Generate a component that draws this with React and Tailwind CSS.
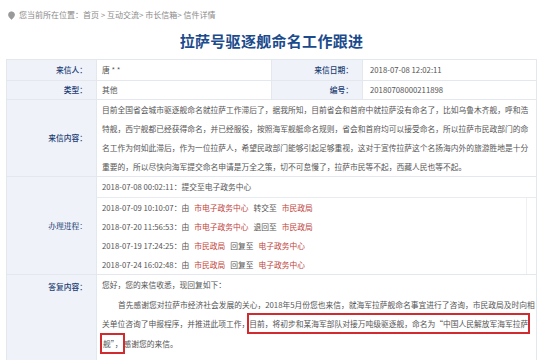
import { MapPin } from "lucide-react";

const label = "shrink-0 bg-[#eff2f8] flex items-center justify-end pr-[9px] text-[#1a3c74] font-medium border-r border-[#e3e7ee]";
const red = "text-[#c0443c] mx-[5px]";

const letterLines = [
    "目前全国省会城市驱逐舰命名就拉萨工作滞后了，据我所知，目前省会和首府中就拉萨没有命名了，比如乌鲁木齐舰，呼和浩",
    "特舰，西宁舰都已经获得命名，并已经服役，按照海军舰艇命名规则，省会和首府均可以接受命名，所以拉萨市民政部门的命",
    "名工作为何如此滞后，作为一位拉萨人，希望民政部门能够引起足够重视，这对于宣传拉萨这个名扬海内外的旅游胜地是十分",
    "重要的，所以尽快向海军提交命名申请是万全之策，切不可怠慢了，拉萨市民等不起，西藏人民也等不起。",
];

const steps = [
    ["2018-07-09 10:10:07", "市电子政务中心", "转交至", "市民政局"],
    ["2018-07-20 11:56:53", "市电子政务中心", "退回至", "市民政局"],
    ["2018-07-19 17:24:25", "市民政局", "回复至", "电子政务中心"],
    ["2018-07-24 16:02:48", "市民政局", "回复至", "电子政务中心"],
];

export default function App() {
    return (
        <div className="w-[550px] h-[360px] overflow-hidden bg-white text-[7.75px] text-[#555] font-['Noto_Sans_CJK_SC',sans-serif]">
            {/* Breadcrumb */}
            <div className="h-[30px] flex items-center pl-[7px] gap-[3px] text-[8px] text-[#8a8a8a]">
                <MapPin size={9} className="fill-[#9a9a9a] text-[#9a9a9a]" />
                <span>您当前所在位置：首页 &gt; 互动交流&gt; 市长信箱&gt; 信件详情</span>
            </div>

            <div className="ml-[6px] w-[531px]">
                {/* Title */}
                <div className="h-[22px] mb-[7px] flex items-center justify-center text-[15px] font-bold text-[#1b4b8c] tracking-[0.3px]">
                    拉萨号驱逐舰命名工作跟进
                </div>

                {/* Table */}
                <div className="border border-[#e3e7ee] border-b-0">
                    <div className="flex h-[21px] border-b border-[#e3e7ee]">
                        <div className={`${label} w-[90px]`}>来信人：</div>
                        <div className="w-[175px] flex items-center pl-[5px] border-r border-[#e3e7ee]">唐 * *</div>
                        <div className={`${label} w-[91px]`}>来信日期：</div>
                        <div className="flex-1 flex items-center pl-[7px]">2018-07-08 12:02:11</div>
                    </div>
                    <div className="flex h-[19px] border-b border-[#e3e7ee]">
                        <div className={`${label} w-[90px]`}>类型：</div>
                        <div className="w-[175px] flex items-center pl-[5px] border-r border-[#e3e7ee]">其他</div>
                        <div className={`${label} w-[91px]`}>编号：</div>
                        <div className="flex-1 flex items-center pl-[7px]">20180708000211898</div>
                    </div>

                    {/* Letter content */}
                    <div className="flex border-b border-[#e3e7ee]">
                        <div className={`${label} w-[90px]`}>来信内容：</div>
                        <div className="flex-1 pl-[5px] leading-[19px]">
                            {letterLines.map((l, i) => (
                                <div key={i} className="whitespace-nowrap">{l}</div>
                            ))}
                        </div>
                    </div>

                    {/* Process */}
                    <div className="flex border-b border-[#e3e7ee]">
                        <div className={`${label} w-[90px] font-bold font-['Noto_Serif_CJK_SC','Noto_Sans_CJK_SC',serif]`}>办理进程：</div>
                        <div className="flex-1">
                            <div className="h-[21px] flex items-center pl-[5px] border-b border-[#e8ebf0]">
                                2018-07-08 00:02:11：提交至电子政务中心
                            </div>
                            <div className="mr-[9px] border-r border-[#eef0f3] leading-[19px] pl-[5px]">
                                {steps.map((s, i) => (
                                    <div key={i} className="whitespace-nowrap">
                                        {s[0]}：由<span className={red}>{s[1]}</span>{s[2]}<span className={red}>{s[3]}</span>
                                    </div>
                                ))}
                            </div>
                        </div>
                    </div>

                    {/* Reply */}
                    <div className="flex">
                        <div className={`${label} w-[90px] items-start pt-[2px] h-[92px]`}>
                            <span className="leading-[19.5px]">答复内容：</span>
                        </div>
                        <div className="flex-1 pl-[5px] leading-[19.5px]">
                            <div className="whitespace-nowrap">您好，您的来信收悉，现回复如下：</div>
                            <div className="whitespace-nowrap pl-[16px]">
                                首先感谢您对拉萨市经济社会发展的关心，2018年5月份您也来信，就海军拉萨舰命名事宜进行了咨询，市民政局及时向相
                            </div>
                            <div className="whitespace-nowrap">
                                关单位咨询了申报程序，并推进此项工作，
                                <span className="outline-2 outline-[#d12a2f] py-[3px]">目前，将初步和某海军部队对接万吨级驱逐舰，命名为“中国人民解放军海军拉萨</span>
                            </div>
                            <div className="whitespace-nowrap">
                                <span className="outline-2 outline-[#d12a2f] py-[3px] px-[1px]">舰”，</span>感谢您的来信。
                            </div>
                        </div>
                    </div>
                </div>
            </div>
        </div>
    );
}
